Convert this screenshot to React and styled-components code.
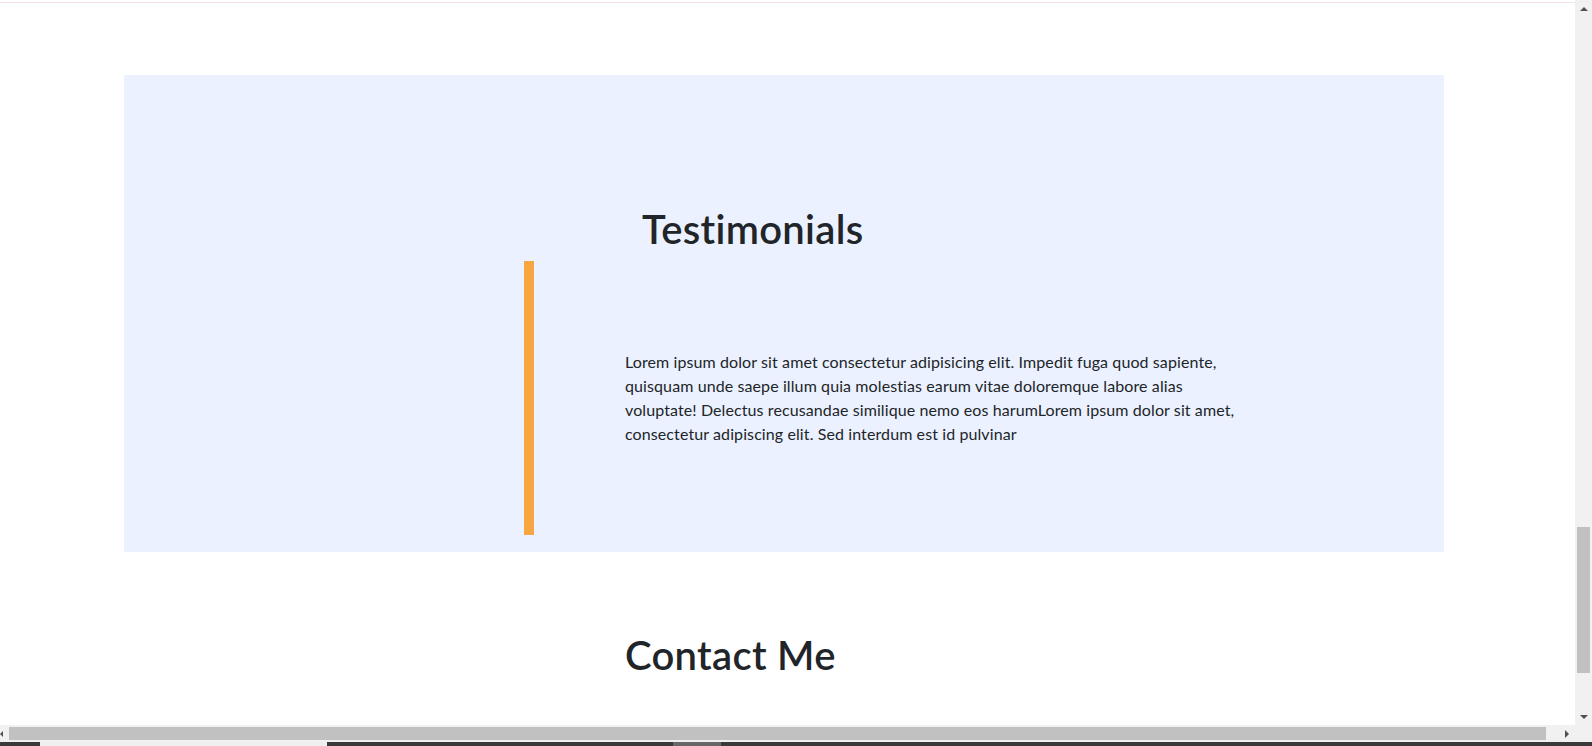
import React from "react";
import styled, { createGlobalStyle, css } from "styled-components";

const GlobalStyle = createGlobalStyle`
  html, body {
    margin: 0;
    padding: 0;
    overflow: hidden;
  }
  body {
    font-family: Lato, "Open Sans", sans-serif;
    color: #212529;
    background: #ffffff;
  }
`;

const Window = styled.div`
  display: grid;
  grid-template-columns: 1fr 17px;
  grid-template-rows: 1fr 17px 4px;
  width: 100vw;
  height: 100vh;
  overflow: hidden;
`;

const Viewport = styled.main`
  overflow: hidden;
  background: #fff;
`;

const TopRule = styled.div`
  height: 2px;
  border-bottom: 1px solid #f6e1e6;
`;

const Page = styled.div`
  padding-left: 124px;
`;

const Testimonials = styled.section`
  width: 1320px;
  height: 477px;
  margin-top: 72px;
  background-color: #ebf1fe;
  display: flex;
  flex-direction: column;
`;

const Title = styled.h1`
  margin: ${(props) => props.$margin || "0"};
  padding: ${(props) => props.$padding || "0"};
  font-size: 40px;
  font-weight: 600;
  line-height: 1.2;
  letter-spacing: 0.3px;
  color: #212529;
`;

const QuoteRow = styled.div`
  display: flex;
  align-items: center;
  height: 274px;
  padding-left: 400px;
`;

const AccentBar = styled.span`
  align-self: stretch;
  width: 10px;
  background-color: #f8a641;
`;

const Quote = styled.p`
  width: 625px;
  margin: 0 0 0 91px;
  font-size: 16px;
  line-height: 24px;
  letter-spacing: 0.1px;
`;

/* fake browser chrome: scrollbars + taskbar strip */
const VScroll = styled.div`
  display: flex;
  flex-direction: column;
  background: #f1f1f1;
`;

const HScroll = styled.div`
  display: flex;
  align-items: center;
  background: #f1f1f1;
`;

const Corner = styled.div`
  background: #f1f1f1;
`;

const ScrollButton = styled.div`
  display: flex;
  align-items: center;
  justify-content: center;
  flex: none;
  width: ${(props) => props.$w || "17px"};
  height: 17px;
  overflow: hidden;
`;

const arrow = {
  up: css`
    border-left: 4px solid transparent;
    border-right: 4px solid transparent;
    border-bottom: 4px solid #505050;
  `,
  down: css`
    border-left: 4px solid transparent;
    border-right: 4px solid transparent;
    border-top: 4px solid #505050;
  `,
  right: css`
    border-top: 4px solid transparent;
    border-bottom: 4px solid transparent;
    border-left: 4px solid #505050;
  `,
  left: css`
    border-top: 4px solid transparent;
    border-bottom: 4px solid transparent;
    border-right: 4px solid #505050;
  `,
};

const Arrow = styled.span`
  width: 0;
  height: 0;
  ${(props) => arrow[props.$dir]}
`;

const VTrack = styled.div`
  flex: 1;
  padding: 510px 2px 0;
`;

const VThumb = styled.div`
  height: 146px;
  background: #c1c1c1;
`;

const HTrack = styled.div`
  flex: 1;
  display: flex;
  align-items: center;
  padding-left: 6px;
`;

const HThumb = styled.div`
  width: 1537px;
  height: 13px;
  background: #c1c1c1;
`;

const Taskbar = styled.div`
  grid-column: 1 / -1;
  display: flex;
  background: #3a3a3a;
`;

const TaskSlot = styled.span`
  width: ${(props) => props.$w}px;
  margin-left: ${(props) => props.$left}px;
  background: ${(props) => props.$color};
`;

const App = () => {
  return (
    <>
      <GlobalStyle />
      <Window>
        <Viewport>
          <TopRule />
          <Page>
            <Testimonials>
              <Title $padding="130px 0 0 518px" $margin="0 0 8px">
                Testimonials
              </Title>
              <QuoteRow>
                <AccentBar />
                <Quote>
                  Lorem ipsum dolor sit amet consectetur adipisicing elit.
                  Impedit fuga quod sapiente, quisquam unde saepe illum quia
                  molestias earum vitae doloremque labore alias voluptate!
                  Delectus recusandae similique nemo eos harumLorem ipsum dolor
                  sit amet, consectetur adipiscing elit. Sed interdum est id
                  pulvinar
                </Quote>
              </QuoteRow>
            </Testimonials>
            <Title $padding="0 0 0 501px" $margin="79px 0 0">
              Contact Me
            </Title>
          </Page>
        </Viewport>
        <VScroll>
          <ScrollButton>
            <Arrow $dir="up" />
          </ScrollButton>
          <VTrack>
            <VThumb />
          </VTrack>
          <ScrollButton>
            <Arrow $dir="down" />
          </ScrollButton>
        </VScroll>
        <HScroll>
          <ScrollButton $w="3px">
            <Arrow $dir="left" />
          </ScrollButton>
          <HTrack>
            <HThumb />
          </HTrack>
          <ScrollButton>
            <Arrow $dir="right" />
          </ScrollButton>
        </HScroll>
        <Corner />
        <Taskbar>
          <TaskSlot $left={40} $w={287} $color="#efefef" />
          <TaskSlot $left={346} $w={48} $color="#676767" />
        </Taskbar>
      </Window>
    </>
  );
};

export default App;
